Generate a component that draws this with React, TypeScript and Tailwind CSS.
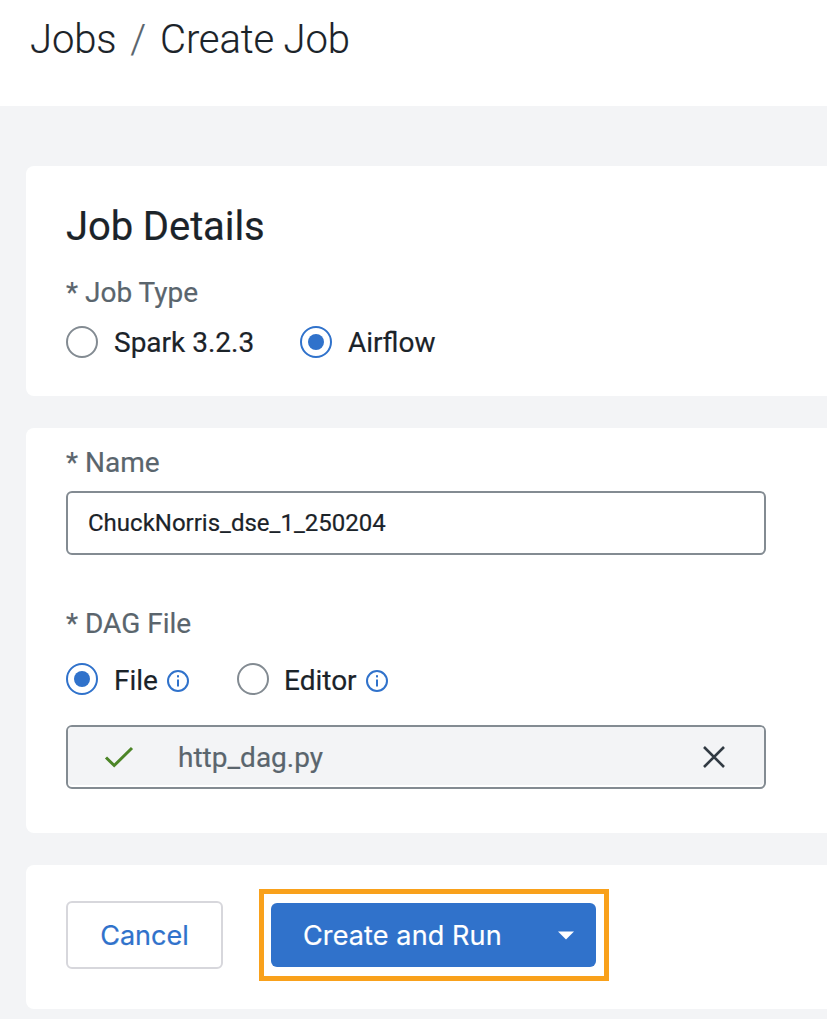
import { ReactNode } from "react";

function Radio({ checked = false }: { checked?: boolean }) {
  return (
    <span
      className={
        checked
          ? "flex size-8 shrink-0 items-center justify-center rounded-full border-2 border-[#3072cb] bg-white"
          : "flex size-8 shrink-0 items-center justify-center rounded-full border-2 border-[#838b92] bg-white"
      }
    >
      {checked && <span className="size-4 rounded-full bg-[#3072cb]" />}
    </span>
  );
}

function InfoIcon() {
  return (
    <svg className="size-[22px] shrink-0" viewBox="0 0 22 22" fill="none">
      <circle cx="11" cy="11" r="10" stroke="#3072cb" strokeWidth="2" />
      <rect x="10" y="5.2" width="2" height="2.2" fill="#3072cb" />
      <rect x="10" y="9.5" width="2" height="7" fill="#3072cb" />
    </svg>
  );
}

function Label({ children }: { children: ReactNode }) {
  return <div className="text-[28px] leading-8 text-[#5a656d]">{children}</div>;
}

export default function App() {
  return (
    <div
      className="flex h-[1019px] w-full flex-col overflow-hidden bg-[#f3f4f6] text-[#1b2329]"
      style={{ fontFamily: 'Roboto, "Liberation Sans", sans-serif' }}
    >
      <header className="flex h-[106px] shrink-0 bg-white pt-4 pl-[30px] text-[40px] leading-12 font-light tracking-[-0.15px] whitespace-pre [-webkit-text-stroke:0.15px]">
        <span>Jobs</span>
        <span className="ml-[14px] text-[#5a656d]">/</span>
        <span className="ml-[14px]">Create Job</span>
      </header>

      <main className="flex flex-col gap-8 pt-[60px] pl-[26px] [-webkit-text-stroke:0.2px]">
        <section className="h-[230px] rounded-l-lg bg-white pt-[37px] pl-10">
          <h1 className="text-[40px] leading-12 tracking-[-0.1px]">Job Details</h1>
          <div className="mt-[26px]">
            <Label>* Job Type</Label>
          </div>
          <div className="mt-[17px] flex h-8 items-center text-[28px] leading-8">
            <Radio />
            <span className="mt-[2px] ml-4 w-[186px]">Spark 3.2.3</span>
            <Radio checked />
            <span className="mt-[2px] ml-4">Airflow</span>
          </div>
        </section>

        <section className="h-[405px] rounded-l-lg bg-white pt-[19px] pl-10">
          <Label>* Name</Label>
          <div className="mt-3 flex h-16 w-[700px] items-center rounded-md border-2 border-[#838b92] px-5 text-2xl">
            ChuckNorris_dse_1_250204
          </div>
          <div className="mt-[53px]">
            <Label>* DAG File</Label>
          </div>
          <div className="mt-[23px] flex h-8 items-center text-[28px] leading-8">
            <Radio checked />
            <span className="mt-1 ml-4 flex w-[123px] items-center justify-start">
              <span className="w-[53px]">File</span>
              <InfoIcon />
            </span>
            <Radio />
            <span className="mt-1 ml-[15px] flex items-center">
              <span className="w-[82px]">Editor</span>
              <InfoIcon />
            </span>
          </div>
          <div className="mt-[30px] flex h-16 w-[700px] items-center rounded-md border-2 border-[#838b92] bg-white pb-[2px] text-[28px] leading-8 text-[#5a656d]">
            <div className="flex h-full w-full items-center rounded bg-[#f3f4f6] pt-[2px] pr-[38px] pl-9">
              <svg className="h-6 w-[30px]" viewBox="0 0 30 24" fill="none">
                <path d="M2 12.5 L10.2 20.5 L28 3" stroke="#4c8527" strokeWidth="3" />
              </svg>
              <span className="mt-[2px] ml-11">http_dag.py</span>
              <svg className="ml-auto size-6" viewBox="0 0 24 24" fill="none">
                <path d="M2 2 L22 22 M22 2 L2 22" stroke="#313a43" strokeWidth="2.6" />
              </svg>
            </div>
          </div>
        </section>

        <section
          className="flex h-36 items-start rounded-l-lg bg-white pt-6 pl-10 text-[27px] leading-8"
          style={{ fontFamily: 'Inter, "Liberation Sans", sans-serif' }}
        >
          <button className="mt-3 flex h-[68px] w-[157px] items-center justify-center rounded-md border-2 border-[#d7d7dc] pt-[2px] text-[#3072cb]">
            Cancel
          </button>
          <div className="ml-9 h-[92px] w-[350px] border-5 border-[#f9a11b] pt-[9px] pl-[7px]">
            <div className="flex h-16 w-[325px] items-center rounded-md bg-[#3072cb] pr-[22px] pl-8 text-white">
              <span className="mt-[2px] tracking-[0.12px]">Create and Run</span>
              <svg className="ml-auto h-[9px] w-4" viewBox="0 0 16 9">
                <path d="M0 0.5H16L8 8.5Z" fill="white" />
              </svg>
            </div>
          </div>
        </section>
      </main>
    </div>
  );
}
